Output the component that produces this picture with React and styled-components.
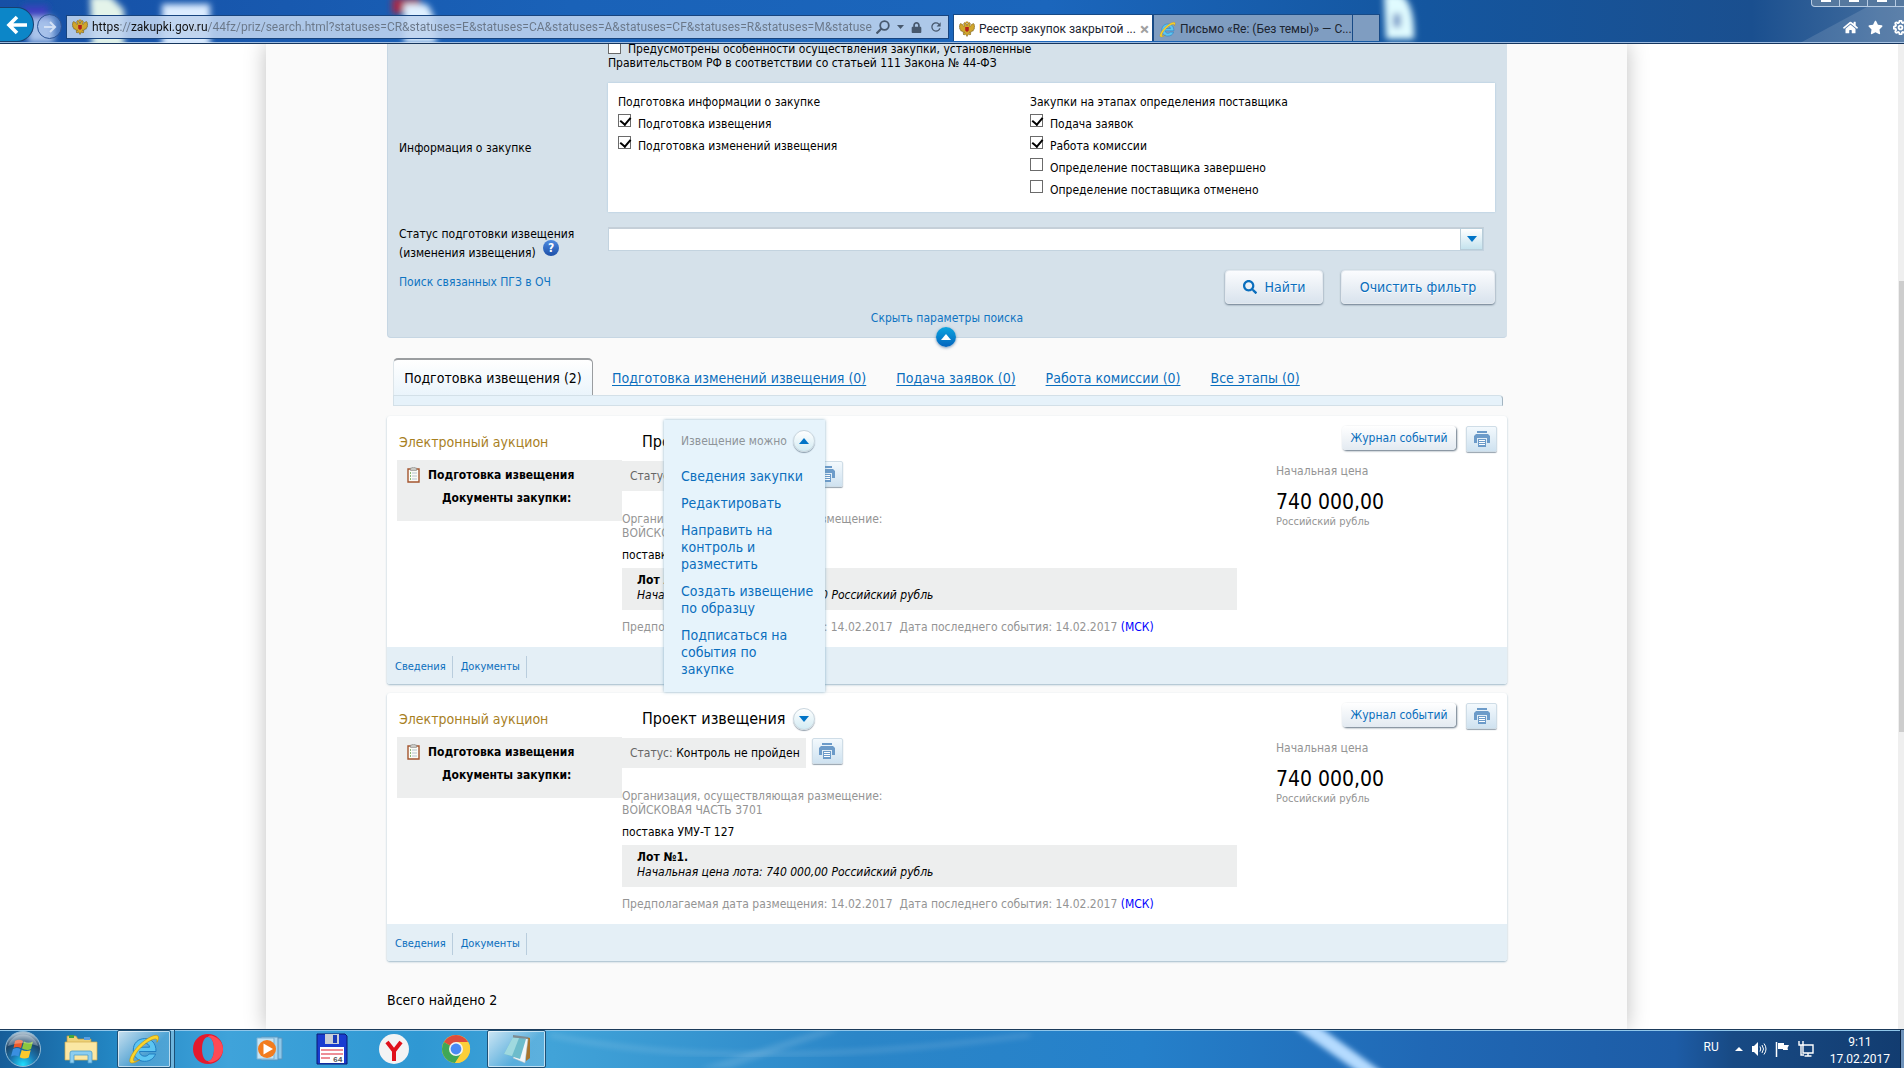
import styled, { createGlobalStyle, css } from "styled-components";
import { FaHome, FaStar, FaLock, FaSearch } from "react-icons/fa";
import { FiSettings } from "react-icons/fi";
import { MdRefresh } from "react-icons/md";

const purchases = [
  { id: 1, open: true },
  { id: 2, open: false },
];

const tabs = [
  "Подготовка изменений извещения (0)",
  "Подача заявок (0)",
  "Работа комиссии (0)",
  "Все этапы (0)",
];

const actions = [
  "Сведения закупки",
  "Редактировать",
  "Направить на\nконтроль и\nразместить",
  "Создать извещение\nпо образцу",
  "Подписаться на\nсобытия по\nзакупке",
];

const Eagle = () => (
  <svg width="16" height="16" viewBox="0 0 16 16" aria-hidden="true">
    <path d="M8 4.500 7 2 5.500 1.500 4.500 3 5.500 4.500 5 5.500 3.500 3.500 1.500 2.500.5 4l.5 1-1 .5L1 7l-.5 1L2 9l-.3 1 1.800.2L4 11.500l1.500-.5L4 13l1 1 1.500-1L8 15.500 9.500 13l1.500 1 1-1-1.500-2 1.500.5.5-1.300 1.800-.2L14 9l1.500-1L15 7l1-1.500-1-.5.5-1-1-1.500-2 1L11 5.500l-.5-1L11.500 3l-1-1.500L9 2z" fill="#d0a52c" stroke="#6b4f0a" strokeWidth=".5" />
    <path d="M6.200 6h3.600v3.500L8 11 6.200 9.500z" fill="#b3201d" />
    <path d="M6.800.5h2.400v1.500H6.800z" fill="#c8961f" />
  </svg>
);

const IeLogo = ({ size }) => (
  <svg width={size} height={size} viewBox="0 0 32 32" aria-hidden="true">
    <path d="M28 18.500H11.500c.3 3 2.400 4.700 5.200 4.700 2 0 3.500-.8 4.500-2.200h6.300c-1.600 4.600-5.700 7.300-10.900 7.300C9.900 28.300 5.300 23.600 5.300 17S10 5.600 16.700 5.600 28.200 10 28 18.500zm-6.400-4.300c-.4-2.500-2.200-3.900-4.900-3.900-2.600 0-4.500 1.400-5.100 3.900z" fill="#5cc5f2" stroke="#1c78bd" strokeWidth=".9" />
    <path d="M12 26.500C6.500 30.500 2.500 31 1.800 28.500.8 24.500 8 13 18 6.500 24.500 2.200 30 1 30.500 4c.2 1.400-.4 3.200-1.600 5.300.6-2.600-.2-3.800-2.700-3.200-4.800 1-12 6.500-16.500 12C6.500 22.700 4.400 27 6 28c1 .6 3.300 0 6-1.500z" fill="#fbd42b" stroke="#c08d0c" strokeWidth=".6" />
  </svg>
);

const PrinterIcon = () => (
  <svg width="16" height="16" viewBox="0 0 16 16" aria-hidden="true">
    <path d="M3 0h10v2H3z" fill="#6c9bc9" />
    <path d="M2 3h12l2 2v7h-3V7H3v5H0V5z" fill="#6c9bc9" />
    <path d="M4 8h8v8H4z" fill="#6c9bc9" />
    <path d="M5 9.500h6M5 11.500h6M5 13.500h6" stroke="#fff" />
  </svg>
);

const Clipboard = () => (
  <svg width="13" height="16" viewBox="0 0 13 16" aria-hidden="true">
    <path d="M1 2h11v13H1z" fill="#fbfbf5" stroke="#a4562f" strokeWidth="1.400" />
    <path d="M3.500 1H5l.5-1h2l.5 1h1.500v2.500h-6z" fill="#c9c9c4" stroke="#8a8a86" strokeWidth=".6" />
    <path d="M3 6h1M3 9h1M3 12h1" stroke="#67a64c" strokeWidth="1.300" />
    <path d="M5 6h5M5 9h5M5 12h5" stroke="#b5c2cf" />
  </svg>
);

const Arrow = ({ up, color = "#0074c7" }) => (
  <svg width="10" height="6" viewBox="0 0 10 6" aria-hidden="true">
    <path d={up ? "M0 6 5 0l5 6z" : "M0 0h10L5 6z"} fill={color} />
  </svg>
);

const TopBackdrop = () => (
  <Backdrop viewBox="0 0 1904 44" preserveAspectRatio="none" aria-hidden="true">
    <defs>
      <filter id="soft" x="-50%" y="-50%" width="200%" height="200%">
        <feGaussianBlur stdDeviation="3" />
      </filter>
    </defs>
    <g filter="url(#soft)">
      <path d="M22 6h26v18H28z" fill="#3d3fc0" />
      <path d="M28 18h26v26H28z" fill="#a9c3ea" />
      <path d="M90 -4h20l14 14v38H92z" fill="#e4f4ea" />
      <path d="M162 4h48v44h-48z" fill="#dcecff" />
      <circle cx="194" cy="28" r="6" fill="#d8c99a" />
      <path d="M392 -2h28v16h-28z" fill="#a52a4c" />
      <path d="M404 4h22q10 8 10 40h-32z" fill="#dff0ff" />
      <path d="M1384 -6h16q15 8 14 46h-28z" fill="#e0fbff" />
      <path d="M1393 14h8v14h-8z" fill="#7c9cc9" />
    </g>
    <path d="M1800 44 1880 0h24v44z" fill="#fff" opacity=".12" />
  </Backdrop>
);

const TaskBackdrop = () => (
  <Backdrop viewBox="0 0 1904 39" preserveAspectRatio="none" aria-hidden="true">
    <defs>
      <filter id="streak">
        <feGaussianBlur stdDeviation="3" />
      </filter>
    </defs>
    <path d="M1290 -6h26l70 52h-24z" fill="#b5dbff" filter="url(#streak)" />
    <path d="M700 39 820 0h20L730 39z" fill="#fff" opacity=".12" filter="url(#streak)" />
    <path d="M550 5q180 40 480 0" stroke="#fff" strokeWidth="6" fill="none" opacity=".1" filter="url(#streak)" />
  </Backdrop>
);

const StartOrb = () => (
  <svg width="38" height="38" viewBox="0 0 38 38" aria-hidden="true">
    <defs>
      <radialGradient id="orb" cx=".5" cy=".95" r=".9">
        <stop offset="0" stopColor="#1fe0ff" />
        <stop offset=".4" stopColor="#1a76b0" />
        <stop offset=".75" stopColor="#1c4468" />
        <stop offset="1" stopColor="#a9bdcc" />
      </radialGradient>
    </defs>
    <circle cx="19" cy="19" r="17.500" fill="url(#orb)" stroke="#8fbad6" />
    <path d="M11 11q4-2.500 8 0l-2 7q-4-2-7.500 0z" fill="#ee5a2a" />
    <path d="M20 11.500q4 2.500 9 0l-2 7.500q-4 2-9-.5z" fill="#8cc63e" />
    <path d="M9 19q4-2 7.500 0l-2 7.500q-4-2-7.500 0z" fill="#3a8fe0" />
    <path d="M17.700 20q4 2 9 .3l-2 7.200q-4.500 2-9-.3z" fill="#fcc92c" />
    <path d="M4 16A15.500 15.500 0 0 1 34 16Q19 10 4 16z" fill="#fff" opacity=".3" />
  </svg>
);

const FolderIcon = () => (
  <svg width="34" height="32" viewBox="0 0 34 32" aria-hidden="true">
    <path d="M3 3h9l2 3h13v20H3z" fill="#edd27a" stroke="#b9953a" strokeWidth=".7" />
    <path d="M5 2h5v3H5z" fill="#3fa63f" />
    <path d="M20 4h6v3h-6z" fill="#5a9ee0" />
    <path d="M1 9h32v18H1z" fill="#fae7a4" stroke="#d1ac4c" strokeWidth=".7" />
    <path d="M6 30V20q0-2 2-2h18q2 0 2 2v10h-4v-8H10v8z" fill="#8bcdf0" stroke="#4b9cc9" strokeWidth=".8" />
  </svg>
);

const OperaIcon = () => (
  <svg width="32" height="32" viewBox="0 0 32 32" aria-hidden="true">
    <path fillRule="evenodd" d="M16 1c8 0 15 6 15 15s-7 15-15 15S1 25 1 16 8 1 16 1zm0 3c-4 0-6 6-6 12s2 12 6 12 6-6 6-12-2-12-6-12z" fill="#e3192d" />
    <path d="M21 3c6 2 10 7 10 13s-4 11-10 13c-3 1-5 0-5-1 4 0 6-6 6-12S20 4 16 4c0-1 2-2 5-1z" fill="#ff4a55" />
  </svg>
);

const PlayerIcon = () => (
  <svg width="30" height="30" viewBox="0 0 30 30" aria-hidden="true">
    <path d="M10 4h17v21H10z" fill="#8fc7e8" stroke="#5896c0" />
    <path d="M6 3h17v23H6z" fill="#a9d6f0" stroke="#5896c0" />
    <path d="M2 4h17v21H2z" fill="#c4e4f5" stroke="#78b0d3" />
    <circle cx="12" cy="15" r="9" fill="#f27c1e" />
    <path d="M8.500 9.500 18 15l-9.500 5.500z" fill="#fff" />
  </svg>
);

const FloppyIcon = () => (
  <svg width="32" height="32" viewBox="0 0 32 32" aria-hidden="true">
    <path d="M1 1h28l2 2v28H1z" fill="#1a3cd0" stroke="#0a1a70" />
    <path d="M9 1h14v10H9z" fill="#c9ced6" />
    <path d="M17 2h4v8h-4z" fill="#1a3cb8" />
    <path d="M4 14h24v16H4z" fill="#fff" />
    <path d="M5 17h22M5 21h22M5 25h9" stroke="#dc1f2e" strokeWidth="1.200" />
    <text x="17" y="29" fontSize="8" fontFamily="Liberation Mono, monospace" fontWeight="bold" fill="#555">64</text>
  </svg>
);

const YandexIcon = () => (
  <svg width="32" height="32" viewBox="0 0 32 32" aria-hidden="true">
    <circle cx="16" cy="16" r="15" fill="#f3f3f4" />
    <path d="M9 9l7 9 7-9M16 17v11" fill="none" stroke="#e0101b" strokeWidth="4" />
  </svg>
);

const ChromeIcon = () => (
  <svg width="30" height="30" viewBox="0 0 30 30" aria-hidden="true">
    <circle cx="15" cy="15" r="14" fill="#fbcf3a" />
    <path d="M15 15 2.900 8A14 14 0 0 1 27.100 8z" fill="#dd4b3c" />
    <path d="M15 15 2.900 8A14 14 0 0 0 14 29l7-10z" fill="#3fa757" />
    <path d="M15 8h12.100A14 14 0 0 1 14 29l7-11z" fill="#fbcf3a" />
    <circle cx="15" cy="15" r="7" fill="#f4f4f4" />
    <circle cx="15" cy="15" r="5.400" fill="#4a8af4" />
  </svg>
);

const NotepadIcon = () => (
  <svg width="32" height="32" viewBox="0 0 32 32" aria-hidden="true">
    <path d="m25 4 4 1v20l-4 3z" fill="#a8742c" />
    <path d="m24 5 3 1-3 24-12-5z" fill="#f2f6f8" stroke="#a9b8c0" strokeWidth=".5" />
    <path d="m12 4 13 2-6 20L3 21z" fill="#6dbccb" />
    <path d="m12 4 6 1-7 18-8-2z" fill="#9fd9df" />
    <path d="m12 2 15 2v2L12 4.500z" fill="#7e8b91" />
  </svg>
);

const taskIcons = [
  { name: "Opera", icon: <OperaIcon /> },
  { name: "Проигрыватель", icon: <PlayerIcon /> },
  { name: "Диспетчер файлов", icon: <FloppyIcon /> },
  { name: "Yandex", icon: <YandexIcon /> },
  { name: "Chrome", icon: <ChromeIcon /> },
];

const BrowserBar = () => (
  <Chrome>
    <TopBackdrop />
    <BackButton aria-label="Назад">
      <svg width="22" height="20" viewBox="0 0 22 20">
        <path d="M21 10H3M11 2l-8 8 8 8" fill="none" stroke="#fff" strokeWidth="3.600" />
      </svg>
    </BackButton>
    <ForwardButton aria-label="Вперёд">
      <svg width="14" height="14" viewBox="0 0 14 14">
        <path d="M1 7h11M7 2l5 5-5 5" fill="none" stroke="#d3e1f5" strokeWidth="2" />
      </svg>
    </ForwardButton>
    <AddressBar>
      <Eagle />
      <AddressInput
        aria-label="Адрес"
        readOnly
        value="https://zakupki.gov.ru/44fz/priz/search.html?statuses=CR&statuses=E&statuses=CA&statuses=A&statuses=CF&statuses=R&statuses=M&statuses="
      />
      <AddressTools>
        <svg width="14" height="14" viewBox="0 0 14 14">
          <circle cx="8.500" cy="5.500" r="4.300" fill="none" stroke="#47586d" strokeWidth="1.800" />
          <path d="m5.500 8.500-5 5" stroke="#47586d" strokeWidth="2.200" />
        </svg>
        <svg width="7" height="4" viewBox="0 0 7 4"><path d="M0 0h7L3.500 4z" fill="#47586d" /></svg>
        <FaLock size={11} />
        <MdRefresh size={14} />
      </AddressTools>
    </AddressBar>
    <BrowserTab $active>
      <Eagle />
      <span>Реестр закупок закрытой ...</span>
      <CloseTab aria-label="Закрыть вкладку">×</CloseTab>
    </BrowserTab>
    <BrowserTab>
      <IeLogo size={17} />
      <span>Письмо «Re: (Без темы)» — С...</span>
    </BrowserTab>
    <NewTab aria-label="Новая вкладка" />
    <WindowButtons aria-hidden="true"><i /><i /><i /></WindowButtons>
    <ChromeTools>
      <FaHome size={15} />
      <FaStar size={15} />
      <FiSettings size={15} strokeWidth={3} />
    </ChromeTools>
  </Chrome>
);

const Check = ({ id, label, checked }) => (
  <CheckRow>
    <Checkbox id={id} type="checkbox" defaultChecked={checked} />
    <label htmlFor={id}>{label}</label>
  </CheckRow>
);

const Filter = () => (
  <FilterPanel>
    <FilterRow>
      <span />
      <LawNote>
        <InlineCheckbox id="law" type="checkbox" />
        <label htmlFor="law">
          Предусмотрены особенности осуществления закупки, установленные<br />
          Правительством РФ в соответствии со статьей 111 Закона № 44-ФЗ
        </label>
      </LawNote>
    </FilterRow>
    <FilterRow $top={13} $center>
      <span>Информация о закупке</span>
      <Stages>
        <Stage>
          <legend>Подготовка информации о закупке</legend>
          <Check id="s1" label="Подготовка извещения" checked />
          <Check id="s2" label="Подготовка изменений извещения" checked />
        </Stage>
        <Stage>
          <legend>Закупки на этапах определения поставщика</legend>
          <Check id="s3" label="Подача заявок" checked />
          <Check id="s4" label="Работа комиссии" checked />
          <Check id="s5" label="Определение поставщика завершено" />
          <Check id="s6" label="Определение поставщика отменено" />
        </Stage>
      </Stages>
    </FilterRow>
    <FilterRow $top={13}>
      <StatusLabel htmlFor="status">
        Статус подготовки извещения<br />(изменения извещения) <Help>?</Help>
      </StatusLabel>
      <SelectWrap>
        <StatusSelect id="status"><option /></StatusSelect>
        <SelectArrow><Arrow /></SelectArrow>
      </SelectWrap>
    </FilterRow>
    <ButtonRow>
      <PlainLink href="#related">Поиск связанных ПГЗ в ОЧ</PlainLink>
      <Buttons>
        <BigButton $width={98}><FaSearch size={14} />Найти</BigButton>
        <BigButton $width={154}>Очистить фильтр</BigButton>
      </Buttons>
    </ButtonRow>
    <HideRow><PlainLink href="#hide">Скрыть параметры поиска</PlainLink></HideRow>
    <Collapse aria-label="Свернуть"><Arrow up color="#fff" /></Collapse>
  </FilterPanel>
);

const Purchase = ({ open }) => (
  <Card>
    <CardBody>
      <KindColumn>
        <Kind>Электронный аукцион</Kind>
        <StageBox>
          <StageTitle><Clipboard />Подготовка извещения</StageTitle>
          <StageDocs>Документы закупки:</StageDocs>
        </StageBox>
      </KindColumn>
      <InfoColumn>
        <Project>
          <h3>Проект извещения</h3>
          <RoundButton aria-label="Действия"><Arrow up={open} /></RoundButton>
          {open && (
            <Menu>
              <MenuTitle>
                <span>Извещение можно</span>
                <RoundButton aria-label="Свернуть меню"><Arrow up /></RoundButton>
              </MenuTitle>
              {actions.map((action) => (
                <a key={action} href="#action">{action}</a>
              ))}
            </Menu>
          )}
        </Project>
        <StatusRow>
          <Status><span>Статус:</span> Контроль не пройден</Status>
          <PrintButton aria-label="Печать статуса"><PrinterIcon /></PrintButton>
        </StatusRow>
        <Organization>
          Организация, осуществляющая размещение:<br />ВОЙСКОВАЯ ЧАСТЬ 3701
        </Organization>
        <Subject>поставка УМУ-Т 127</Subject>
        <Lot>
          <b>Лот №1.</b>
          <i>Начальная цена лота: 740 000,00 Российский рубль</i>
        </Lot>
        <Dates>
          <span>Предполагаемая дата размещения: 14.02.2017</span>
          <span>Дата последнего события: 14.02.2017 <a href="#msk">(МСК)</a></span>
        </Dates>
      </InfoColumn>
      <PriceColumn>
        <PriceTools>
          <JournalButton>Журнал событий</JournalButton>
          <PrintButton aria-label="Печать"><PrinterIcon /></PrintButton>
        </PriceTools>
        <PriceLabel>Начальная цена</PriceLabel>
        <Price>740 000,00</Price>
        <Currency>Российский рубль</Currency>
      </PriceColumn>
    </CardBody>
    <CardFooter>
      <a href="#info">Сведения</a>
      <a href="#docs">Документы</a>
    </CardFooter>
  </Card>
);

const Taskbar = () => (
  <TaskPanel>
    <TaskBackdrop />
    <TaskButton $width={45} aria-label="Пуск"><StartOrb /></TaskButton>
    <TaskButton $width={72} aria-label="Проводник"><FolderIcon /></TaskButton>
    <TaskButton $width={54} $active aria-label="Internet Explorer"><IeLogo size={32} /></TaskButton>
    <StackEdge />
    {taskIcons.map((task) => (
      <TaskButton key={task.name} $width={62} aria-label={task.name}>{task.icon}</TaskButton>
    ))}
    <TaskButton $width={59} $active aria-label="Блокнот"><NotepadIcon /></TaskButton>
    <Tray>
      <Lang>RU</Lang>
      <svg width="8" height="4" viewBox="0 0 8 4"><path d="M0 4 4 0l4 4z" fill="#fff" /></svg>
      <svg width="16" height="16" viewBox="0 0 16 16">
        <path d="M1 5h2l4-4v14l-4-4H1z" fill="#fff" />
        <path d="M9 5.500q1.500 2.500 0 5M11 4q3 4 0 8M13 2.500q4 5.500 0 11" fill="none" stroke="#fff" />
      </svg>
      <svg width="15" height="16" viewBox="0 0 15 16">
        <path d="M1.500 1v15" stroke="#fff" strokeWidth="1.500" />
        <path d="M3 2h6v2h5l-1.500 3L13 9H8V8H3z" fill="#fff" />
      </svg>
      <svg width="16" height="16" viewBox="0 0 16 16">
        <path d="M5 4h10v8H5zM10 12v3M6.500 15h7" fill="none" stroke="#fff" strokeWidth="1.400" />
        <path d="M1 0v4h4V0M3 4v10h3" fill="none" stroke="#fff" strokeWidth="1.400" />
      </svg>
      <Clock><span>9:11</span><span>17.02.2017</span></Clock>
      <ShowDesktop aria-label="Показать рабочий стол" />
    </Tray>
  </TaskPanel>
);

const App = () => {
  return (
    <Screen>
      <GlobalStyle />
      <BrowserBar />
      <Viewport>
        <Page>
          <Content>
            <Filter />
            <Tabs>
              <ActiveTab>Подготовка извещения (2)</ActiveTab>
              {tabs.map((tab) => (
                <a key={tab} href="#tab">{tab}</a>
              ))}
            </Tabs>
            <TabStrip />
            <CardList>
              {purchases.map((purchase) => (
                <Purchase key={purchase.id} open={purchase.open} />
              ))}
            </CardList>
            <Total>Всего найдено 2</Total>
          </Content>
        </Page>
        <ScrollTrack><ScrollThumb /></ScrollTrack>
      </Viewport>
      <Taskbar />
    </Screen>
  );
};

const GlobalStyle = createGlobalStyle`
  * {
    box-sizing: border-box;
  }

  body {
    margin: 0;
    font: 12px/14px "DejaVu Sans Condensed", "DejaVu Sans", sans-serif;
    color: #000;
  }

  button {
    font: inherit;
    padding: 0;
    border: 0;
  }

  a {
    color: #0a6ebd;
    text-decoration: none;
  }
`;

const centered = css`
  display: flex;
  align-items: center;
  justify-content: center;
`;

const Screen = styled.div`
  display: flex;
  flex-direction: column;
  height: 100vh;
  overflow: hidden;
`;

const Backdrop = styled.svg`
  position: absolute;
  inset: 0;
  width: 100%;
  height: 100%;
  pointer-events: none;
`;

/* browser */

const Chrome = styled.header`
  position: relative;
  display: flex;
  flex: none;
  align-items: flex-end;
  height: 44px;
  padding-bottom: 2px;
  overflow: hidden;
  background: linear-gradient(90deg, #1650a6, #1a62b8 30%, #1b66bc 55%, #14569f 75%, #1a4f8f 92%, #47709f);
  border-bottom: 1px solid #16365e;
  box-shadow: inset 0 -1px 0 #9dbbe0;
  font: 12px/16px Roboto, sans-serif;

  > :not(svg) {
    position: relative;
  }
`;

const BackButton = styled.button`
  ${centered}
  flex: none;
  width: 33px;
  height: 33px;
  border-radius: 0 17px 17px 0;
  background: #0c86c8;
  box-shadow: 0 0 0 1px #17406f;
`;

const ForwardButton = styled.button`
  ${centered}
  flex: none;
  width: 25px;
  height: 25px;
  margin: 0 4px 2px;
  border: 1px solid #2b5394;
  border-radius: 50%;
  background: rgba(160, 190, 235, 0.35);
`;

const AddressBar = styled.div`
  display: flex;
  align-items: center;
  flex: 0 1 883px;
  height: 24px;
  margin: 0 4px 2px 0;
  padding: 0 5px;
  gap: 4px;
  border: 1px solid #17447f;
  background: rgba(190, 211, 238, 0.9);
`;

const AddressInput = styled.input`
  flex: 1;
  min-width: 0;
  padding: 0;
  border: 0;
  outline: 0;
  font: inherit;
  color: transparent;
  background: linear-gradient(90deg, #111 28px, #6a7788 28px 39px, #111 39px 115px, #6a7788 115px);
  background-clip: text;
`;

const AddressTools = styled.div`
  display: flex;
  align-items: center;
  gap: 7px;
  color: #47586d;
`;

const BrowserTab = styled.div`
  display: flex;
  align-items: center;
  flex: 0 1 200px;
  min-width: 0;
  height: 27px;
  padding: 2px 5px 0;
  gap: 4px;
  white-space: nowrap;
  border: 1px solid #174a86;
  border-bottom: 0;
  color: #1b2430;
  background: ${({ $active }) => ($active ? "#fff" : "#7f9dc1")};

  svg {
    flex: none;
  }
`;

const CloseTab = styled.button`
  margin-left: auto;
  font-size: 17px;
  font-weight: bold;
  color: #a0a0a0;
  background: none;
`;

const NewTab = styled.button`
  width: 27px;
  height: 27px;
  border: 1px solid #174a86;
  border-width: 1px 1px 0 0;
  background: #7f9dc1;
`;

const WindowButtons = styled.div`
  display: flex;
  align-self: flex-start;
  margin-left: auto;
  width: 94px;
  height: 7px;
  border: 1px solid #b6cbe3;
  border-top: 0;
  border-radius: 0 0 0 4px;
  background: #55789f;

  i {
    width: 28px;
    border-right: 1px solid #b6cbe3;
    background: linear-gradient(#fff, #fff) center top / 10px 2px no-repeat;
  }
`;

const ChromeTools = styled.div`
  display: flex;
  gap: 10px;
  margin: 0 -4px 6px -62px;
  color: #fff;
`;

/* page */

const Viewport = styled.div`
  display: flex;
  flex: 1;
  min-height: 0;
  overflow: hidden;
  background: #fff;
`;

const Page = styled.main`
  flex: 1;
  margin: 0 271px 0 266px;
  padding: 0 120px 0 121px;
  background: #fafafa;
  box-shadow: 0 0 20px rgba(0, 0, 0, 0.25);
`;

const Content = styled.div`
  margin-top: -2px;
`;

const ScrollTrack = styled.div`
  width: 6px;
  padding: 237px 0 0 1px;
  background: #efefef;
`;

const ScrollThumb = styled.div`
  height: 451px;
  background: #cdcdcd;
`;

const FilterPanel = styled.form`
  position: relative;
  padding: 0 12px 12px 11px;
  border: solid #c6d6e3;
  border-width: 0 0 1px 1px;
  border-radius: 0 0 4px 4px;
  background: #d5e1ea;
`;

const FilterRow = styled.div`
  display: grid;
  grid-template-columns: 209px 1fr;
  align-items: ${({ $center }) => ($center ? "center" : "start")};
  margin-top: ${({ $top = 0 }) => $top}px;
`;

const LawNote = styled.div`
  line-height: 14px;
`;

const Checkbox = styled.input`
  appearance: none;
  flex: none;
  width: 13px;
  height: 13px;
  margin: 0 7px 8px 0;
  border: 1px solid #6b6b6b;
  background: #fff;

  &:checked::after {
    content: "";
    display: block;
    width: 5px;
    height: 8px;
    margin: 0 0 0 3px;
    border: solid #000;
    border-width: 0 2px 2px 0;
    transform: rotate(40deg);
  }
`;

const InlineCheckbox = styled(Checkbox)`
  margin: -4px 7px 0 0;
  vertical-align: middle;
`;

const Stages = styled.div`
  display: grid;
  grid-template-columns: 412px 1fr;
  padding: 12px 10px 11px;
  background: #fff;
  box-shadow: 0 0 2px #a9c8dc;
`;

const Stage = styled.fieldset`
  margin: 0;
  padding: 0;
  border: 0;

  legend {
    margin-bottom: 4px;
    padding: 0;
  }
`;

const CheckRow = styled.div`
  display: flex;
  align-items: center;
  height: 22px;
`;

const StatusLabel = styled.label`
  height: 38px;
  line-height: 19px;
`;

const Help = styled.span`
  display: inline-block;
  width: 16px;
  height: 16px;
  margin: -4px 0 0 4px;
  border-radius: 50%;
  background: linear-gradient(#4f8be0, #1c4fa8);
  color: #fff;
  line-height: 16px;
  font-weight: bold;
  text-align: center;
  vertical-align: top;
`;

const SelectWrap = styled.div`
  position: relative;
  margin: 2px 11px 0 0;
`;

const StatusSelect = styled.select`
  appearance: none;
  display: block;
  width: 100%;
  height: 24px;
  border: 1px solid #c3d3df;
  border-top: 2px solid #c5cfd8;
  border-radius: 0;
  background: #fff;
`;

const SelectArrow = styled.span`
  ${centered}
  position: absolute;
  top: 1px;
  right: 1px;
  width: 23px;
  height: 22px;
  border: 1px solid #b8cdd9;
  background: linear-gradient(#fff, #c5e3ee);
  pointer-events: none;
`;

const ButtonRow = styled.div`
  display: flex;
  justify-content: space-between;
  margin-top: 7px;

  > a {
    padding-top: 5px;
  }
`;

const PlainLink = styled.a`
  color: #0f74c2;
`;

const Buttons = styled.div`
  display: flex;
  gap: 18px;
`;

const BigButton = styled.button.attrs({ type: "button" })`
  ${centered}
  gap: 8px;
  width: ${({ $width }) => $width}px;
  height: 34px;
  border: 1px solid #e3e9ef;
  border-radius: 4px;
  background: linear-gradient(#fbfcfe, #d9e3ed);
  box-shadow: 0 1px 2px rgba(60, 80, 100, 0.7);
  color: #0a6ebd;
  font-size: 14px;
  text-shadow: 0 1px 0 #fff;
`;

const HideRow = styled.div`
  margin-top: 7px;
  text-align: center;
`;

const Collapse = styled.button.attrs({ type: "button" })`
  ${centered}
  position: absolute;
  bottom: -10px;
  left: calc(50% - 12px);
  width: 20px;
  height: 20px;
  border-radius: 50%;
  background: linear-gradient(#0ba4df, #0464bd);
  box-shadow: 0 1px 3px rgba(0, 60, 120, 0.5);
`;

const Tabs = styled.nav`
  display: flex;
  align-items: center;
  gap: 30px;
  height: 37px;
  margin: 20px 4px 0 6px;
  font-size: 14px;

  a {
    padding-top: 2px;
    text-decoration: underline;
    text-underline-offset: 2px;
    white-space: nowrap;
  }
`;

const ActiveTab = styled.span`
  ${centered}
  align-self: stretch;
  flex: none;
  width: 200px;
  margin-right: -11px;
  border: 1px solid #9a9da0;
  border-top-width: 2px;
  border-left-color: #dde5ea;
  border-bottom: 0;
  border-radius: 5px 5px 0 0;
  background: linear-gradient(#fff, #eaf4fb);
`;

const TabStrip = styled.div`
  height: 11px;
  margin: 0 4px 0 6px;
  border: 1px solid #d3e0e8;
  border-right-color: #a3b4c0;
  border-radius: 0 4px 0 0;
  background: #e6f2fa;
`;

const CardList = styled.div`
  display: flex;
  flex-direction: column;
  gap: 9px;
  margin-top: 10px;
`;

const Card = styled.article`
  border-radius: 3px;
  background: #fff;
  box-shadow: 0 1px 2px rgba(110, 150, 175, 0.65);
`;

const CardBody = styled.div`
  display: grid;
  grid-template-columns: 225px 615px 1fr;
  padding: 0 10px 13px;
`;

const KindColumn = styled.div`
  padding-top: 17px;
`;

const Kind = styled.div`
  padding-left: 2px;
  font-size: 14px;
  line-height: 18px;
  color: #a8801f;
`;

const StageBox = styled.div`
  height: 61px;
  margin-top: 9px;
  padding: 6px 10px;
  background: #edeeee;
  font-weight: bold;
`;

const StageTitle = styled.div`
  display: flex;
  align-items: center;
  gap: 8px;
  height: 18px;
`;

const StageDocs = styled.div`
  margin-top: 7px;
  padding-left: 35px;
`;

const InfoColumn = styled.div`
  padding-top: 15px;
`;

const Project = styled.div`
  position: relative;
  display: flex;
  align-items: center;
  justify-content: space-between;
  width: 182px;
  height: 22px;
  padding-left: 20px;

  h3 {
    margin: 0;
    font-size: 16px;
    font-weight: normal;
    white-space: nowrap;
  }
`;

const RoundButton = styled.button`
  ${centered}
  flex: none;
  width: 22px;
  height: 22px;
  margin-right: -11px;
  border: 1px solid #c9d6de;
  border-radius: 50%;
  background: linear-gradient(#fff, #d3ebf3);
  box-shadow: 0 1px 1px rgba(80, 100, 120, 0.6);
`;

const Menu = styled.div`
  position: absolute;
  z-index: 2;
  top: -11px;
  left: 42px;
  display: flex;
  flex-direction: column;
  gap: 10px;
  width: 161px;
  padding: 10px 16px 14px 17px;
  background: #e6f3fb;
  box-shadow: 0 0 3px rgba(100, 150, 180, 0.7);
  font-size: 14px;
  line-height: 17px;
  white-space: pre;
`;

const MenuTitle = styled.div`
  display: flex;
  align-items: center;
  justify-content: space-between;
  height: 22px;
  margin: 0 5px 6px 0;
  font-size: 12px;
  color: #8e9499;
`;

const StatusRow = styled.div`
  display: flex;
  gap: 6px;
  height: 30px;
  margin-top: 8px;
`;

const Status = styled.div`
  padding: 8px 6px 8px 8px;
  background: #edeeee;

  span {
    color: #666;
  }
`;

const PrintButton = styled.button`
  ${centered}
  width: 31px;
  height: 26px;
  border: 1px solid #cfdde7;
  border-radius: 2px;
  background: linear-gradient(#f3f9fd, #cfe2f0);
  box-shadow: 0 1px 1px rgba(80, 100, 120, 0.6);
`;

const Organization = styled.div`
  margin-top: 21px;
  color: #949494;
`;

const Subject = styled.div`
  margin-top: 8px;
`;

const Lot = styled.div`
  display: flex;
  flex-direction: column;
  margin-top: 6px;
  padding: 5px 15px 7px;
  line-height: 15px;
  background: #edeeee;
`;

const Dates = styled.div`
  display: flex;
  gap: 7px;
  margin-top: 10px;
  color: #949494;

  a {
    color: #00f;
  }
`;

const PriceColumn = styled.div`
  padding: 10px 0 0 39px;
`;

const PriceTools = styled.div`
  display: flex;
  justify-content: flex-end;
  gap: 10px;
  height: 27px;
`;

const JournalButton = styled.button`
  width: 114px;
  height: 24px;
  border-radius: 4px;
  background: linear-gradient(#fff, #e3eaf1);
  box-shadow: 1px 1px 2px rgba(60, 80, 100, 0.8);
  color: #0a6ebd;
`;

const PriceLabel = styled.div`
  margin-top: 11px;
  color: #949494;
`;

const Price = styled.div`
  margin-top: 11px;
  font-size: 21px;
  line-height: 26px;
`;

const Currency = styled.div`
  font-size: 11px;
  color: #949494;
`;

const CardFooter = styled.footer`
  display: flex;
  align-items: center;
  height: 37px;
  padding-top: 2px;
  border-radius: 0 0 3px 3px;
  background: #e4eff6;
  font-size: 11px;

  a {
    padding: 4px 6px 4px 8px;
    border-right: 1px solid #b9cddd;
  }
`;

const Total = styled.p`
  margin: 32px 0;
  font-size: 14px;
`;

/* taskbar */

const TaskPanel = styled.footer`
  position: relative;
  display: flex;
  flex: none;
  height: 39px;
  border-top: 1px solid #1b3a5a;
  background: linear-gradient(90deg, #165d99, #2387c4 6%, #3fa3da 12%, #2f98d3 22%, #41a3d8 29%, #2b86c8 45%, #2580ca 60%, #2068b5 75%, #1d5ca6 88%, #184a84 91%, #123c70);
  box-shadow: inset 0 1px 0 #8fc6ea;
  font: 12px/16px Roboto, sans-serif;

  > :not(svg) {
    position: relative;
  }
`;

const TaskButton = styled.button`
  ${centered}
  width: ${({ $width }) => $width}px;
  background: ${({ $active }) =>
    $active ? "linear-gradient(135deg, rgba(255,255,255,.75), rgba(255,255,255,.15) 60%)" : "none"};
  border: ${({ $active }) => ($active ? "1px solid #1d5076" : "0")};
  box-shadow: ${({ $active }) => ($active ? "inset 0 0 0 1px rgba(255,255,255,.6)" : "none")};
  border-radius: 2px;
`;

const StackEdge = styled.span`
  width: 4px;
  margin-right: 2px;
  border-right: 1px solid #1d5076;
  background: rgba(255, 255, 255, 0.3);
`;

const Tray = styled.div`
  display: flex;
  align-items: center;
  gap: 8px;
  margin-left: auto;
  color: #fff;
`;

const Lang = styled.span`
  margin: 0 8px 4px 0;
`;

const Clock = styled.time`
  display: flex;
  flex-direction: column;
  align-items: center;
  margin: 4px 2px 0 8px;
  line-height: 17px;
`;

const ShowDesktop = styled.button`
  width: 4px;
  height: 100%;
  border-left: 1px solid #0a2344;
  background: #6f93bb;
`;

export default App;
